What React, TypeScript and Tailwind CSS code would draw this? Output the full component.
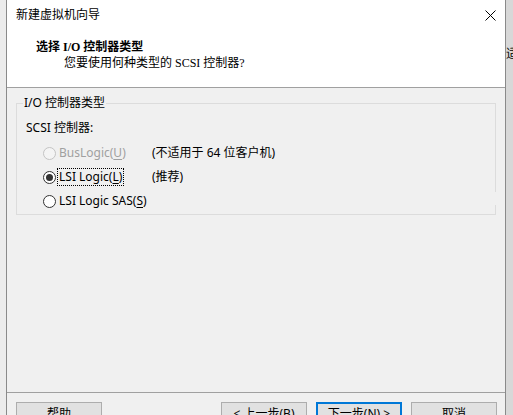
import React from "react";

const ui = { fontFamily: '"Noto Sans", "Noto Sans CJK SC", sans-serif' };
const serif = { fontFamily: '"Liberation Serif", "Noto Sans CJK SC", serif' };

function Radio({ checked, disabled }: { checked?: boolean; disabled?: boolean }) {
  return (
    <span
      className={
        "flex h-[13px] w-[13px] shrink-0 items-center justify-center rounded-full border " +
        (disabled ? "border-[#c4c4c4] bg-[#f4f4f4]" : "border-[#333333] bg-white")
      }
    >
      {checked && <span className="h-[7px] w-[7px] rounded-full bg-[#333333]" />}
    </span>
  );
}

function Row({
  label,
  mn,
  after,
  note,
  checked,
  disabled,
  focus,
}: {
  label: string;
  mn: string;
  after: string;
  note?: string;
  checked?: boolean;
  disabled?: boolean;
  focus?: boolean;
}) {
  return (
    <div className="flex h-[24px] items-center pl-[26px]">
      <div className="flex w-[109px] items-center gap-[2px]">
        <Radio checked={checked} disabled={disabled} />
        <span
          className={
            "px-[1px] leading-[16px] " +
            (disabled ? "text-[#a0a0a0]" : "text-black") +
            (focus ? " outline-1 outline-dotted outline-black" : "")
          }
        >
          {label}(<span className="underline underline-offset-2">{mn}</span>{after})
        </span>
      </div>
      {note && <span className="leading-[16px] text-black">{note}</span>}
    </div>
  );
}

function Btn({ children, primary }: { children: React.ReactNode; primary?: boolean }) {
  return (
    <div
      className={
        "flex h-[23px] w-[86px] shrink-0 items-center justify-center bg-[#e1e1e1] text-[12px] text-black " +
        (primary ? "border-2 border-[#0078d7]" : "border border-[#adadad]")
      }
    >
      {children}
    </div>
  );
}

export default function App() {
  return (
    <div className="flex h-[415px] w-[513px] overflow-hidden bg-[#ececec] text-[12px]" style={ui}>
      <div className="h-full w-[6px] shrink-0 bg-[#ececec]" />
      <div className="flex h-full w-[500px] shrink-0 flex-col border-x border-[#8a8a8a] bg-[#f0f0f0]">
        {/* header */}
        <div className="relative h-[87px] shrink-0 bg-white">
          <div className="pl-[9px] pt-[7px] leading-[16px] text-black">新建虚拟机向导</div>
          <svg
            className="absolute right-[9px] top-[10px]"
            width="11"
            height="11"
            viewBox="0 0 11 11"
          >
            <path d="M0.5 0.5 L10.5 10.5 M10.5 0.5 L0.5 10.5" stroke="#000" strokeWidth="1" />
          </svg>
          <div className="mt-[16px] pl-[29px] font-bold leading-[16px] text-black" style={serif}>
            选择 I/O 控制器类型
          </div>
          <div className="pl-[57px] leading-[16px] text-black" style={serif}>
            您要使用何种类型的 SCSI 控制器?
          </div>
        </div>
        <div className="h-px shrink-0 bg-[#a0a0a0]" />
        {/* body */}
        <div className="flex-1">
          <div className="relative mx-[9px] mt-[15px] border border-[#dcdcdc] pb-[1px] pt-[16px]">
            <span className="absolute -top-[9px] left-[6px] bg-[#f0f0f0] px-[1px] leading-[16px] text-black">
              I/O 控制器类型
            </span>
            <div className="absolute -right-px top-[88px] h-[13px] w-px bg-[#f0f0f0]" />
            <div className="pl-[9px] leading-[16px] text-black">SCSI 控制器:</div>
            <div className="mt-[5px]">
              <Row label="BusLogic" mn="U" after="" note="(不适用于 64 位客户机)" disabled />
              <Row label="LSI Logic" mn="L" after="" note="(推荐)" checked focus />
              <Row label="LSI Logic SAS" mn="S" after="" />
            </div>
          </div>
        </div>
        <div className="h-px shrink-0 bg-[#a0a0a0]" />
        {/* footer */}
        <div className="flex h-[22px] shrink-0 items-start pl-[9px] pt-[9px]">
          <Btn>帮助</Btn>
          <div className="ml-[119px] flex gap-[9px]">
            <Btn>&lt; 上一步(B)</Btn>
            <Btn primary>下一步(N) &gt;</Btn>
            <Btn>取消</Btn>
          </div>
        </div>
      </div>
      <div className="h-full w-[7px] shrink-0 overflow-hidden bg-[#d8d8d8]">
        <div className="pt-[46px] text-[12px] leading-[16px] text-black">适</div>
      </div>
    </div>
  );
}
